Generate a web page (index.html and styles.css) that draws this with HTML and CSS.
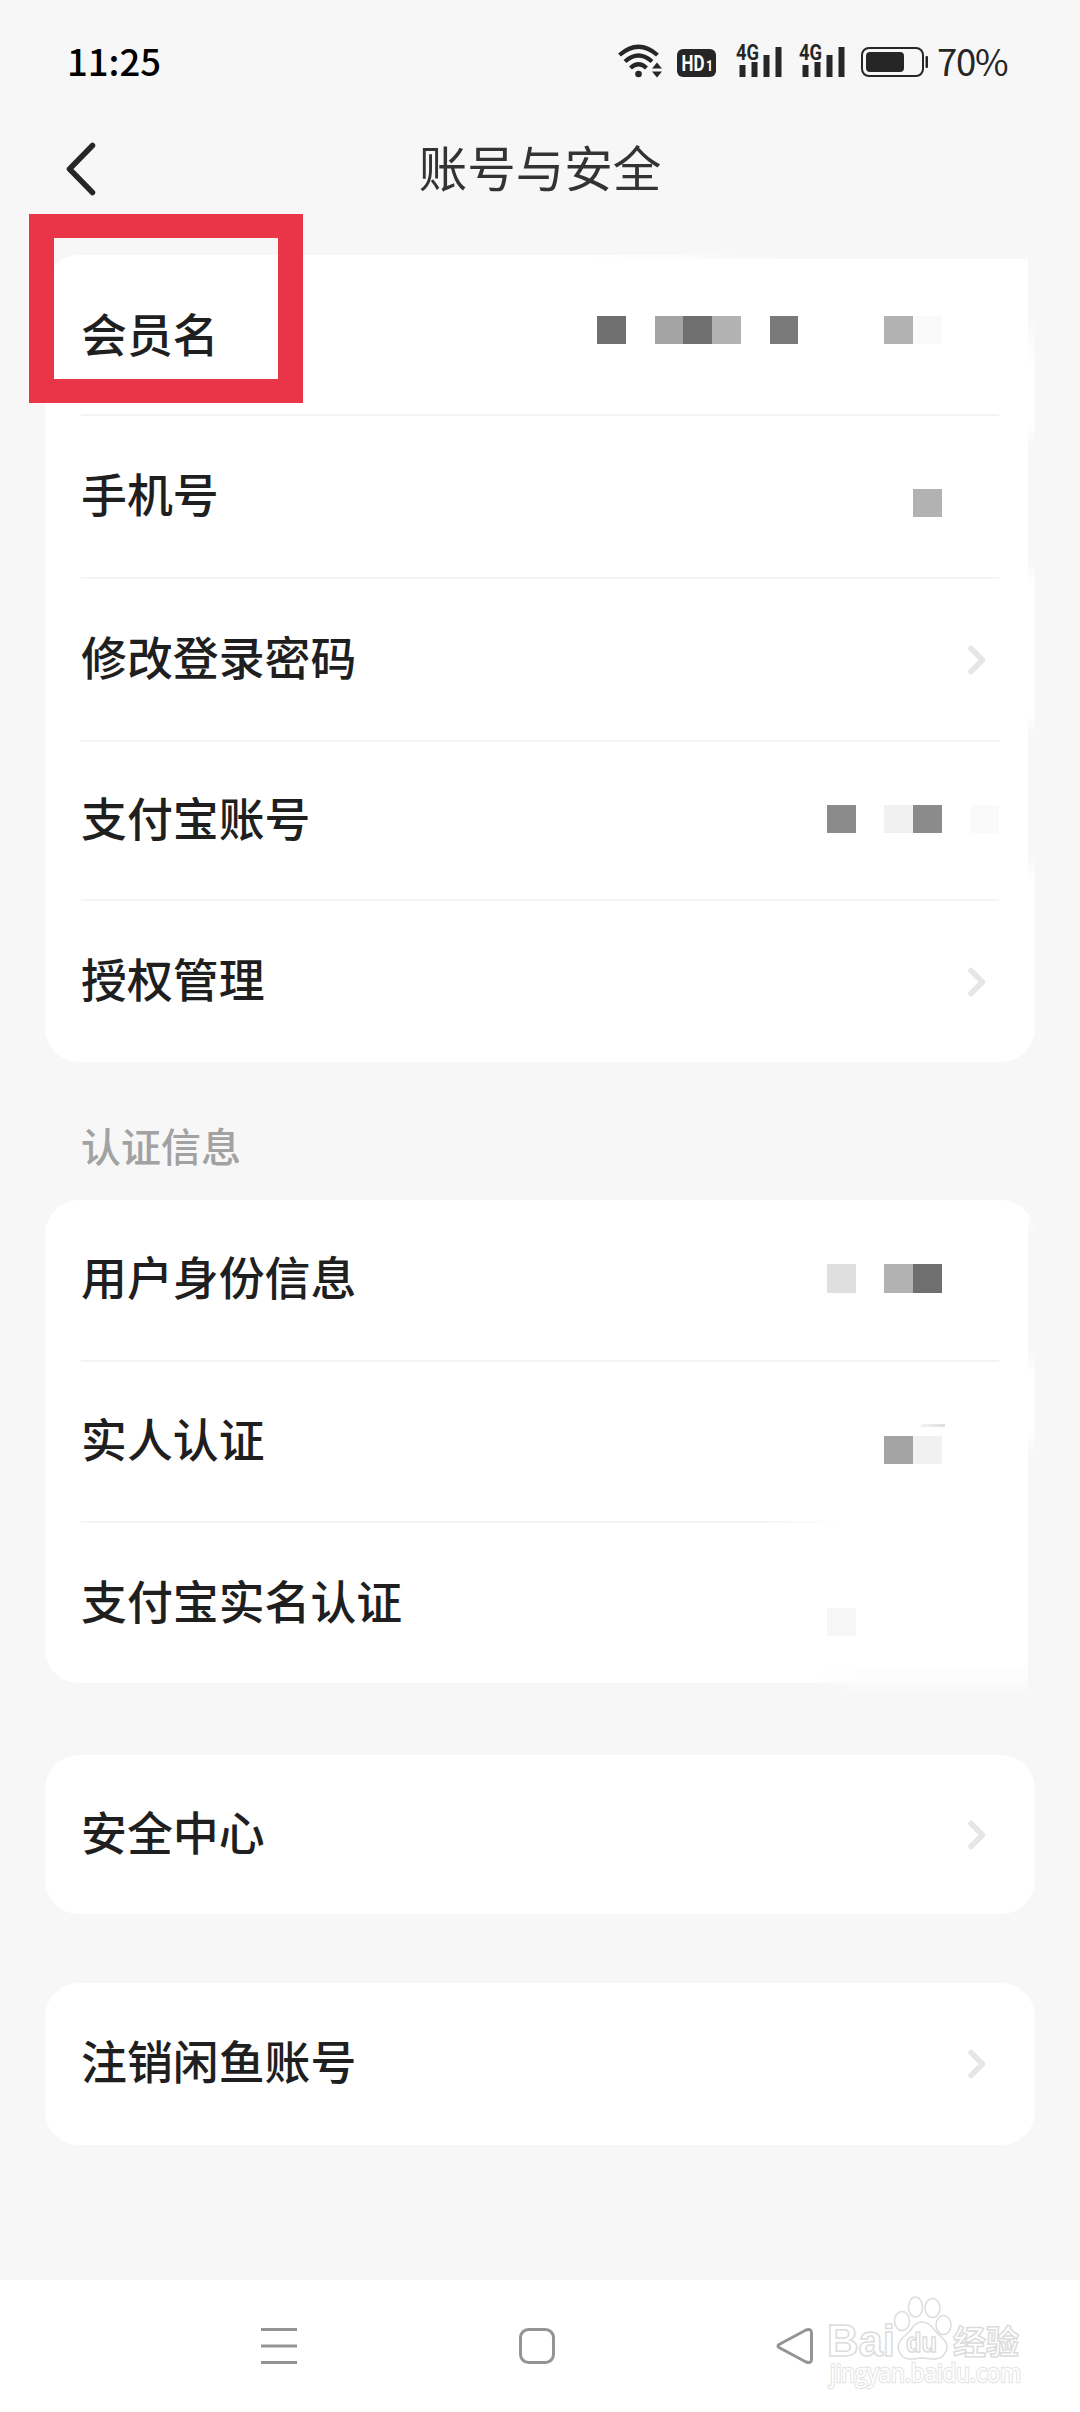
FILE: index.html
```html
<!DOCTYPE html>
<html lang="zh-CN">
<head>
    <meta charset="UTF-8">
    <meta name="viewport" content="width=device-width, initial-scale=1.0">
    <title>账号与安全</title>
    <link rel="stylesheet" href="styles.css">
</head>
<body>
    <div class="status-bar">
        <span class="clock">11:25</span>
        <div class="status-icons">
            <svg class="wifi" width="46" height="36" viewBox="0 0 46 36">
                <g fill="none" stroke="#262626" stroke-width="4.200">
                    <path d="M1.500 11Q20.500 -5.500 39.500 11"/>
                    <path d="M7 17.500Q20.500 5.500 34 17.500"/>
                    <path d="M12.500 24Q20.500 16.500 28.500 24"/>
                </g>
                <circle cx="20.500" cy="30" r="3.300" fill="#262626"/>
                <path d="M34 24.500h10l-5-6zM34 27.500h10l-5 6z" fill="#262626"/>
            </svg>
            <svg class="hd" width="40" height="28" viewBox="0 0 40 28">
                <rect width="39" height="28" rx="6"/>
                <text x="4.500" y="22" font-size="22" textLength="23" lengthAdjust="spacingAndGlyphs">HD</text>
                <text x="29" y="22" font-size="15" textLength="7" lengthAdjust="spacingAndGlyphs">1</text>
            </svg>
            <svg class="signal" width="46" height="36" viewBox="0 0 46 36">
                <text x="0" y="16" font-size="22" textLength="23" lengthAdjust="spacingAndGlyphs">4G</text>
                <path d="M3.500 21h6v12h-6zM15.500 18h6v15h-6zM27.500 11h6v22h-6zM39.500 3h6v30h-6z"/>
            </svg>
            <svg class="signal" width="46" height="36" viewBox="0 0 46 36">
                <text x="0" y="16" font-size="22" textLength="23" lengthAdjust="spacingAndGlyphs">4G</text>
                <path d="M3.500 21h6v12h-6zM15.500 18h6v15h-6zM27.500 11h6v22h-6zM39.500 3h6v30h-6z"/>
            </svg>
            <svg class="battery" width="67" height="30" viewBox="0 0 67 30">
                <rect x="1" y="1" width="61" height="28" rx="7" fill="none" stroke="#262626" stroke-width="2"/>
                <rect x="5" y="5" width="38" height="20" rx="4" fill="#262626"/>
                <rect x="64.500" y="9" width="2.500" height="12" rx="1" fill="#262626"/>
            </svg>
            <span class="percent">70%</span>
        </div>
    </div>

    <div class="header">
        <svg class="back" width="36" height="56" viewBox="0 0 36 56">
            <path d="M29.500 4.500L6.500 28L29.500 51.500" fill="none" stroke="#262626" stroke-width="5.500" stroke-linecap="round" stroke-linejoin="round"/>
        </svg>
        <h1>账号与安全</h1>
    </div>

    <div class="card account">
        <div class="row first">
            <span class="label">会员名</span>
            <div class="mosaic">
                <i class="g1"></i><i></i><i class="g3"></i><i class="g1"></i><i class="g4"></i><i></i><i class="g1 mid"></i><i></i><i></i><i></i><i class="g4"></i><i class="g7"></i><i></i><i></i>
            </div>
        </div>
        <div class="row">
            <span class="label">手机号</span>
            <div class="mosaic low"><i class="g4"></i><i></i><i></i></div>
        </div>
        <div class="row">
            <span class="label">修改登录密码</span>
            <svg class="chevron" width="18" height="30" viewBox="0 0 18 30"><path d="M3 3.500L14.500 15L3 26.500"/></svg>
        </div>
        <div class="row short">
            <span class="label">支付宝账号</span>
            <div class="mosaic near"><i class="g2"></i><i></i><i class="g6"></i><i class="g2"></i><i></i><i class="g7"></i></div>
        </div>
        <div class="row">
            <span class="label">授权管理</span>
            <svg class="chevron" width="18" height="30" viewBox="0 0 18 30"><path d="M3 3.500L14.500 15L3 26.500"/></svg>
        </div>
        <b class="top-edge"></b>
        <b class="edge edge-1"></b>
        <b class="edge edge-2"></b>
        <b class="edge edge-3"></b>
    </div>

    <h2>认证信息</h2>

    <div class="card verify">
        <div class="row">
            <span class="label">用户身份信息</span>
            <div class="mosaic near"><i class="g5"></i><i></i><i class="g4"></i><i class="g1"></i><i></i><i></i></div>
        </div>
        <div class="row faded">
            <span class="label">实人认证</span>
            <div class="mosaic lower"><i class="g3"></i><i class="g6"></i><i></i><i></i></div>
        </div>
        <div class="row">
            <span class="label">支付宝实名认证</span>
            <div class="mosaic lowest"><i class="g8"></i><i></i><i></i><i></i><i></i><i></i></div>
        </div>
        <b class="stroke-rest"></b>
        <b class="edge edge-4"></b>
        <b class="edge edge-5"></b>
        <b class="bottom-edge"></b>
    </div>

    <div class="card single">
        <div class="row">
            <span class="label">安全中心</span>
            <svg class="chevron" width="18" height="30" viewBox="0 0 18 30"><path d="M3 3.500L14.500 15L3 26.500"/></svg>
        </div>
    </div>

    <div class="card single last">
        <div class="row">
            <span class="label">注销闲鱼账号</span>
            <svg class="chevron" width="18" height="30" viewBox="0 0 18 30"><path d="M3 3.500L14.500 15L3 26.500"/></svg>
        </div>
    </div>

    <div class="nav-bar">
        <svg width="40" height="40" viewBox="0 0 40 40">
            <path d="M2 3.500h36M2 20h36M2 36.500h36"/>
        </svg>
        <svg width="40" height="40" viewBox="0 0 40 40">
            <rect x="3.500" y="3.500" width="33" height="33" rx="8"/>
        </svg>
        <svg width="40" height="40" viewBox="0 0 40 40">
            <path d="M4 18.500L31 4Q36.500 2 36.500 7V33Q36.500 38 31 36L4 21.500Q2 20 4 18.500Z"/>
        </svg>
    </div>

    <div class="highlight"></div>

    <svg class="watermark" width="220" height="114" viewBox="0 0 220 114">
        <g>
            <ellipse cx="78" cy="27" rx="7.500" ry="9.500"/>
            <ellipse cx="91.500" cy="13" rx="7" ry="10"/>
            <ellipse cx="108.500" cy="14" rx="7.500" ry="9.500"/>
            <ellipse cx="119.500" cy="31" rx="7.500" ry="9.500"/>
            <path d="M98 28C106 28 109 35 115 41C123 47 125 53 121 59C117 67 107 65 98 64C89 65 80 67 76 59C72 53 75 46 82 41C88 36 90 28 98 28Z"/>
        </g>
        <text class="wm-bold" x="3" y="62" font-size="44" textLength="68" lengthAdjust="spacingAndGlyphs">Bai</text>
        <text class="wm-bold" x="82" y="58" font-size="28" textLength="31" lengthAdjust="spacingAndGlyphs">du</text>
        <text class="wm-bold" x="129" y="60" font-size="33">经验</text>
        <text class="wm-url" x="6" y="88" font-size="25" textLength="191" lengthAdjust="spacingAndGlyphs">jingyan.baidu.com</text>
    </svg>
</body>
</html>
```

FILE: styles.css
```css
* {
    box-sizing: border-box;
}
body {
    position: relative;
    width: 1080px;
    height: 2412px;
    margin: 0;
    display: flex;
    flex-direction: column;
    overflow: hidden;
    background-color: #f7f7f7;
    color: #1f1f1f;
    font-family: "Noto Sans CJK SC", sans-serif;
}

/* status bar */
.status-bar {
    display: flex;
    justify-content: space-between;
    height: 125px;
    padding: 44px 72px 0 67px;
}
.clock {
    height: 38px;
    margin-top: -2px;
    color: #000;
    font-size: 36.500px;
    font-weight: 500;
    line-height: 38px;
}
.status-icons {
    display: flex;
    align-items: flex-start;
    height: 36px;
    color: #262626;
}
.hd {
    margin: 5px 19px 0 13px;
    fill: #262626;
    font-family: Roboto, sans-serif;
    font-weight: bold;
}
.hd text {
    fill: #fff;
}
.signal {
    margin-right: 17px;
    overflow: visible;
    fill: #262626;
    font-family: Roboto, sans-serif;
    font-weight: bold;
}
.battery {
    margin: 3px 9px 0 -1px;
}
.percent {
    width: 71px;
    margin-top: -2px;
    font-size: 36.500px;
    letter-spacing: -1.200px;
    line-height: 38px;
}

/* header */
.header {
    display: flex;
    align-items: center;
    height: 89px;
    padding: 0 63px;
}
.back {
    margin-top: -2px;
}
h1 {
    flex: 1;
    margin: -7px 36px 0 0;
    color: #333;
    font-size: 48.500px;
    font-weight: 400;
    line-height: 60px;
    text-align: center;
}

/* cards */
.card {
    position: relative;
    display: flex;
    flex-direction: column;
    width: 990px;
    margin-left: 45px;
    padding: 0 36px;
    border-radius: 34px;
    background-color: #fff;
}
.account {
    height: 807px;
    margin-top: 41px;
    border-top-right-radius: 0;
}
.verify {
    height: 483px;
}
.single {
    height: 159px;
    margin-top: 72px;
}
.last {
    height: 162px;
    margin-top: 69px;
}
.row {
    display: flex;
    flex: 1;
    align-items: center;
    justify-content: space-between;
    border-bottom: 2px solid #f4f4f4;
}
.row.first {
    flex: none;
    height: 161px;
}
.row.short {
    flex: none;
    height: 159px;
}
.row:nth-last-of-type(1) {
    border-bottom: none;
}
.faded {
    border-image: linear-gradient(to right, #f4f4f4 74%, #fff 83%) 2;
}
.label {
    padding-bottom: 9px;
    font-size: 45.900px;
    font-weight: 500;
    line-height: 60px;
}
.first .label {
    padding-bottom: 6px;
}
.single .label {
    padding-bottom: 10px;
}
.chevron {
    margin-right: 13px;
}
.chevron path {
    fill: none;
    stroke: #e6e6e6;
    stroke-width: 5.500px;
    stroke-linecap: round;
    stroke-linejoin: round;
}
h2 {
    height: 138px;
    margin: 0;
    padding: 54px 81px 0;
    color: #a2a2a2;
    font-size: 40px;
    font-weight: 500;
    line-height: 58px;
}

/* hidden values */
.mosaic {
    display: flex;
    margin-bottom: 9px;
}
.mosaic i {
    width: 28.700px;
    height: 28.500px;
}
.mosaic.near {
    margin-bottom: 3px;
}
.mosaic.low {
    margin: 13px 0 0;
}
.mosaic.lower {
    margin: 17px 0 0;
}
.mosaic.lowest {
    margin: 38px 0 0;
}
.g1 { background-color: #6f6f6f; }
.g1.mid { background-color: #7a7a7a; }
.g2 { background-color: #8b8b8b; }
.g3 { background-color: #a4a4a4; }
.g4 { background-color: #b2b2b2; }
.g5 { background-color: #dfdfdf; }
.g6 { background-color: #f1f1f1; }
.g7 { background-color: #fafafa; }
.g8 { background-color: #f6f6f6; }

/* worn edges beside the hidden values */
.edge {
    position: absolute;
    right: 0;
    width: 7px;
    background: linear-gradient(transparent, #f7f7f7 20px, #f7f7f7 calc(100% - 24px), transparent);
}
.edge-1 {
    top: 0;
    height: 115px;
    background: linear-gradient(#f7f7f7 60px, transparent);
}
.edge-2 { top: 170px; height: 160px; }
.edge-3 { top: 460px; height: 165px; }
.edge-4 { top: 14px; height: 160px; }
.edge-5 { top: 228px; height: 255px; background: linear-gradient(transparent, #f7f7f7 28px); }
.top-edge {
    position: absolute;
    top: 0;
    right: 0;
    width: 450px;
    height: 4px;
    background: linear-gradient(to right, transparent, #f7f7f7 50%);
}
.bottom-edge {
    position: absolute;
    right: 7px;
    bottom: -11px;
    width: 220px;
    height: 28px;
    background: linear-gradient(#fdfdfd 40%, #f7f7f7);
    -webkit-mask-image: linear-gradient(to right, transparent, #000 60px);
    mask-image: linear-gradient(to right, transparent, #000 60px);
}
.stroke-rest {
    position: absolute;
    top: 224px;
    left: 876px;
    width: 24px;
    height: 3px;
    background: linear-gradient(to right, #f4f4f4, #dedede);
}

/* bottom navigation */
.nav-bar {
    display: flex;
    gap: 218px;
    height: 132px;
    margin-top: auto;
    padding: 46px 0 0 259px;
    background-color: #fff;
}
.nav-bar svg {
    fill: none;
    stroke: #949494;
    stroke-width: 3px;
}

.highlight {
    position: absolute;
    left: 29px;
    top: 214px;
    width: 274px;
    height: 189px;
    border: solid #ea3548;
    border-width: 24px 25px;
}

.watermark {
    position: absolute;
    left: 824px;
    top: 2294px;
    overflow: visible;
    fill: #fff;
    stroke: #dcdcdc;
    stroke-width: 1.500px;
}
.wm-bold {
    font-family: "Liberation Sans", "Noto Sans CJK SC", sans-serif;
    font-weight: bold;
}
.wm-url {
    font-family: "Open Sans", sans-serif;
    stroke: #e6e6e6;
    stroke-width: 2.500px;
    paint-order: stroke;
}
```
